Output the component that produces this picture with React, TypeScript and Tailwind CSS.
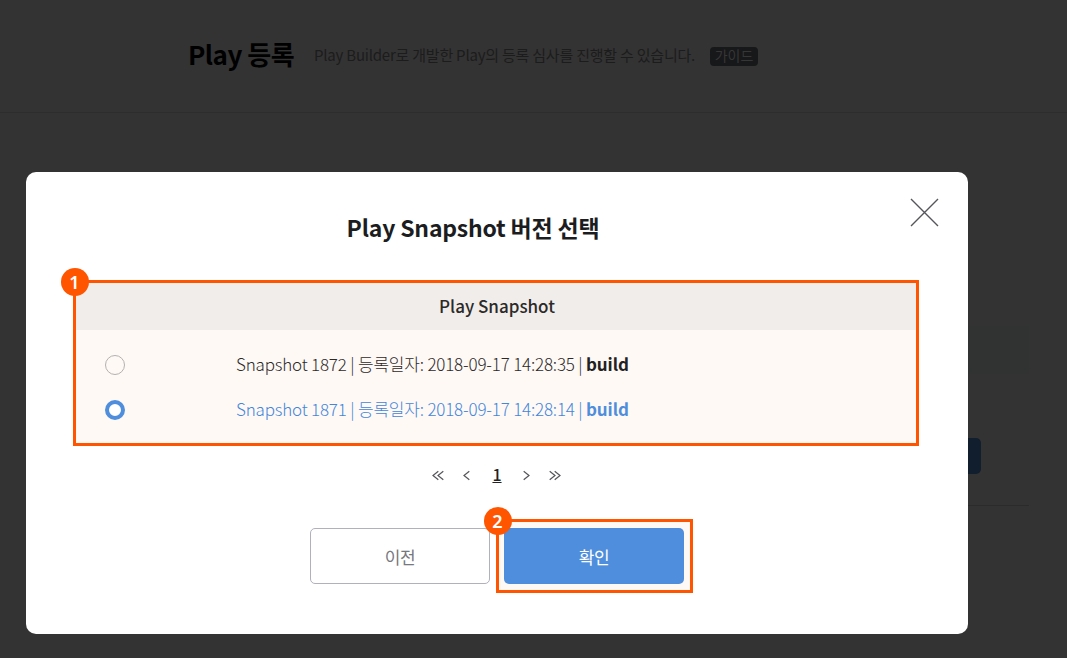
import React from "react";

type Snapshot = { id: number; date: string; selected: boolean };

const snapshots: Snapshot[] = [
  { id: 1872, date: "2018-09-17 14:28:35", selected: false },
  { id: 1871, date: "2018-09-17 14:28:14", selected: true },
];

function Step({ n }: { n: number }) {
  return (
    <span className="absolute -top-[15px] -left-[15.5px] flex size-7 items-center justify-center rounded-full bg-[#ff5500] pb-px font-['Noto_Sans'] text-[18px] leading-none font-semibold text-white">
      {n}
    </span>
  );
}

function Chevrons({ double = false, flip = false }: { double?: boolean; flip?: boolean }) {
  return (
    <svg
      width={double ? 12 : 7}
      height="11"
      viewBox={double ? "0 0 12 11" : "0 0 7 11"}
      fill="none"
      stroke="#55555a"
      strokeWidth="1.2"
      className={flip ? "-scale-x-100" : ""}
    >
      <path d="M6.3 1.2 L1 5.5 L6.3 9.8" />
      {double && <path d="M11.3 1.2 L6 5.5 L11.3 9.8" />}
    </svg>
  );
}

function Page() {
  return (
    <div className="h-full bg-[#333333]">
      <header className="flex h-[113px] items-start border-b border-[#2d2d2d] pl-[188px]">
        <h1 className="mt-[34px] w-[107px] text-[26px] leading-10 font-bold tracking-[-0.5px] whitespace-nowrap text-black">
          Play 등록
        </h1>
        <p className="mt-[43px] ml-[19px] w-[381px] text-[15px] leading-6 tracking-[-0.22px] whitespace-nowrap text-[#1c1c1c]">
          Play Builder로 개발한 Play의 등록 심사를 진행할 수 있습니다.
        </p>
        <span className="mt-[47px] ml-[15px] flex h-[19px] w-12 items-center justify-center rounded-[4px] bg-[#17181a] pb-[3px] text-[14px] leading-none text-[#363636]">
          가이드
        </span>
      </header>
      <div className="mt-[213px] mr-[38px] ml-[188px] h-12 bg-[#303332]" />
      <div className="mt-16 mr-[86px] ml-[188px] h-9 rounded-[5px] bg-[#101e2e]" />
      <div className="mt-[31px] mr-[38px] ml-[188px] h-px bg-[#2b2b2b]" />
    </div>
  );
}

function Dialog() {
  return (
    <section className="absolute top-[172px] left-[26px] h-[462px] w-[942px] rounded-[10px] bg-white">
      <h2 className="mr-[48px] pt-[37px] pb-px text-center text-[23px] leading-9 font-bold tracking-[-0.2px] text-[#1c1d21]">
        Play Snapshot 버전 선택
      </h2>
      <button className="absolute top-[26px] right-[29px]" aria-label="닫기">
        <svg width="29" height="29" viewBox="0 0 29 29" stroke="#55565c" strokeWidth="1.4">
          <path d="M1 1 L28 28 M28 1 L1 28" />
        </svg>
      </button>

      <div className="relative mt-[34px] ml-[47px] h-[166px] w-[846px] border-[3px] border-[#ff5500] bg-[#fff9f6]">
        <Step n={1} />
        <div className="flex h-[47px] items-center justify-center bg-[#f1edea] pb-[2px] pl-[2px] text-[17px] font-medium text-[#2b2a29]">
          Play Snapshot
        </div>
        <ul className="pt-[12px]">
          {snapshots.map((s) => (
            <li
              key={s.id}
              className={`flex h-[45px] items-center pl-[29px] text-[17px] ${s.selected ? "text-[#4386da]" : "text-[#2c2a29]"}`}
            >
              <span
                className={`size-5 rounded-full ${s.selected ? "border-4 border-[#4f8edc] bg-white" : "border border-[#b3b1b1]"}`}
              />
              <span className="ml-[111px] pb-[2px] font-light tracking-[-0.19px] whitespace-nowrap">
                Snapshot {s.id} | 등록일자: {s.date} |{" "}
                <b className={`font-bold tracking-[-0.1px] ${s.selected ? "text-[#4f8edc]" : "text-[#222222]"}`}>build</b>
              </span>
            </li>
          ))}
        </ul>
      </div>

      <nav className="flex h-[60px] items-center justify-center gap-[19px] pr-px pb-[2px]">
        <Chevrons double />
        <Chevrons />
        <span className="w-[15px] pb-[2px] pl-px text-center text-[16px] leading-6 font-medium text-[#222222] underline">1</span>
        <Chevrons flip />
        <Chevrons double flip />
      </nav>

      <div className="mt-[13px] ml-[284px] flex items-start">
        <button className="mt-[9px] h-14 w-[180px] rounded-[5px] border border-[#b0b1bb] pt-[2px] text-[17px] tracking-[-0.3px] text-[#77787d]">
          이전
        </button>
        <div className="relative ml-[6px] h-[74px] w-[197px] border-[3px] border-[#ff5500] bg-[#fff9f6] px-[5px] py-[6px]">
          <Step n={2} />
          <button className="block h-14 w-[180px] rounded-[5px] bg-[#4f8edc] pt-[2px] text-[17px] tracking-[-0.3px] text-white">확인</button>
        </div>
      </div>
    </section>
  );
}

export default function App() {
  return (
    <main className="relative h-[658px] w-[1067px] overflow-hidden font-['Noto_Sans_CJK_KR',sans-serif]">
      <Page />
      <Dialog />
    </main>
  );
}
